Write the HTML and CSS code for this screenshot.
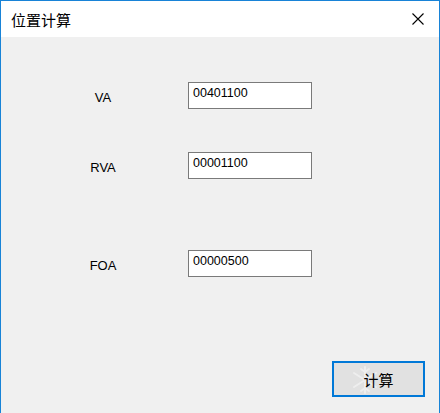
FILE: index.html
```html
<!DOCTYPE html>
<html>
<head>
<meta charset="utf-8">
<link rel="stylesheet" href="styles.css">
</head>
<body>
<div class="window">
  <div class="titlebar">
    <span class="title">位置计算</span>
    <span class="close">
      <svg width="12" height="12" viewBox="0 0 12 12"><path d="M0.5 0.5 L11.5 11.5 M11.5 0.5 L0.5 11.5" stroke="#000" stroke-width="1.1" fill="none"/></svg>
    </span>
  </div>
  <div class="content">
    <div class="row row-va">
      <span class="label">VA</span>
      <div class="field">00401100</div>
    </div>
    <div class="row row-rva">
      <span class="label">RVA</span>
      <div class="field">00001100</div>
    </div>
    <div class="row row-foa">
      <span class="label">FOA</span>
      <div class="field">00000500</div>
    </div>
    <div class="actions">
      <button class="btn">
        <svg class="flake" width="26" height="30" viewBox="0 0 26 30">
          <g stroke="#ffffff" stroke-width="2" fill="none" stroke-linecap="round">
            <path d="M13 2 V28 M2 8 L24 22 M24 8 L2 22"/>
            <path d="M9 4 L13 7 L17 4 M9 26 L13 23 L17 26"/>
          </g>
        </svg>
        <span class="btn-text">计算</span>
      </button>
    </div>
  </div>
</div>
</body>
</html>
```
FILE: styles.css
```css
html, body {
  margin: 0;
  padding: 0;
}
body {
  width: 440px;
  height: 413px;
  overflow: hidden;
  font-family: "Liberation Sans", Arial, "Noto Sans CJK SC", sans-serif;
}
.window {
  box-sizing: border-box;
  width: 440px;
  height: 413px;
  border: 1px solid #1883d7;
  border-bottom: none;
  background: #f0f0f0;
  display: flex;
  flex-direction: column;
}
.titlebar {
  height: 36px;
  background: #fff;
  display: flex;
  align-items: center;
  justify-content: space-between;
  padding-left: 10px;
  padding-right: 15px;
}
.title {
  font-family: "Noto Sans CJK SC", sans-serif;
  font-size: 15px;
  color: #000;
  line-height: 18px;
  margin-top: 1px;
}
.close {
  display: flex;
  width: 12px;
  height: 12px;
  margin-top: -1px;
}
.content {
  flex: 1;
  display: flex;
  flex-direction: column;
}
.row {
  display: flex;
  align-items: center;
  height: 27px;
}
.row-va { margin-top: 45px; }
.row-rva { margin-top: 43px; }
.row-foa { margin-top: 71px; }
.label {
  width: 46px;
  margin-left: 79px;
  margin-right: 62px;
  text-align: center;
  font-size: 13px;
  color: #000;
  padding-top: 3px;
}
.field {
  box-sizing: border-box;
  width: 124px;
  height: 27px;
  border: 1px solid #7a7a7a;
  background: #fff;
  font-size: 12.5px;
  line-height: 15px;
  padding: 3px 0 0 4px;
  color: #000;
}
.actions {
  margin-top: auto;
  margin-bottom: 16px;
  display: flex;
  justify-content: flex-end;
  padding-right: 14px;
}
.btn {
  position: relative;
  box-sizing: border-box;
  width: 93px;
  height: 36px;
  border: 2px solid #0078d7;
  background: #e1e1e1;
  font-family: "Noto Sans CJK SC", sans-serif;
  font-size: 15px;
  color: #000;
  padding: 0;
  margin: 0;
  overflow: hidden;
  display: flex;
  align-items: center;
  justify-content: center;
}
.flake {
  position: absolute;
  left: 18px;
  top: 2px;
  opacity: 0.45;
}
.btn-text {
  position: relative;
}
```
